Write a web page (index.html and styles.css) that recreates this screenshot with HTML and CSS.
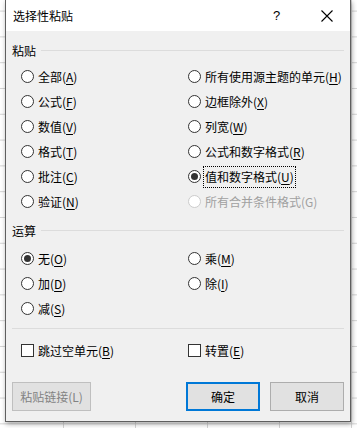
FILE: index.html
```html
<!DOCTYPE html>
<html lang="zh-CN">
<head>
    <meta charset="UTF-8">
    <meta name="viewport" content="width=device-width, initial-scale=1.0">
    <title>选择性粘贴</title>
    <link rel="stylesheet" href="styles.css">
</head>
<body>
    <div class="dialog">
        <div class="titlebar">
            <span class="title">选择性粘贴</span>
            <span class="help">?</span>
            <span class="close">
                <svg width="12" height="12" viewBox="0 0 12 12"><path d="M0.5 0.5 L11.5 11.5 M11.5 0.5 L0.5 11.5" stroke="#000" stroke-width="1.1" fill="none"/></svg>
            </span>
        </div>

        <div class="group-head"><span>粘贴</span><i class="rule"></i></div>
        <div class="options six">
            <label class="opt"><span class="radio"></span>全部(<u>A</u>)</label>
            <label class="opt"><span class="radio"></span>所有使用源主题的单元(<u>H</u>)</label>
            <label class="opt"><span class="radio"></span>公式(<u>F</u>)</label>
            <label class="opt"><span class="radio"></span>边框除外(<u>X</u>)</label>
            <label class="opt"><span class="radio"></span>数值(<u>V</u>)</label>
            <label class="opt"><span class="radio"></span>列宽(<u>W</u>)</label>
            <label class="opt"><span class="radio"></span>格式(<u>T</u>)</label>
            <label class="opt"><span class="radio"></span>公式和数字格式(<u>R</u>)</label>
            <label class="opt"><span class="radio"></span>批注(<u>C</u>)</label>
            <label class="opt"><span class="radio on"></span><span class="focus">值和数字格式(<u>U</u>)</span></label>
            <label class="opt"><span class="radio"></span>验证(<u>N</u>)</label>
            <label class="opt disabled"><span class="radio"></span>所有合并条件格式(G)</label>
        </div>

        <div class="group-head second"><span>运算</span><i class="rule"></i></div>
        <div class="options three">
            <label class="opt"><span class="radio on"></span>无(<u>O</u>)</label>
            <label class="opt"><span class="radio"></span>乘(<u>M</u>)</label>
            <label class="opt"><span class="radio"></span>加(<u>D</u>)</label>
            <label class="opt"><span class="radio"></span>除(<u>I</u>)</label>
            <label class="opt"><span class="radio"></span>减(<u>S</u>)</label>
        </div>

        <div class="separator"></div>

        <div class="options checks">
            <label class="opt"><span class="check"></span>跳过空单元(<u>B</u>)</label>
            <label class="opt"><span class="check"></span>转置(<u>E</u>)</label>
        </div>

        <div class="buttons">
            <button class="btn" disabled>粘贴链接(L)</button>
            <span class="spacer"></span>
            <button class="btn default">确定</button>
            <button class="btn">取消</button>
        </div>
    </div>
</body>
</html>
```

FILE: styles.css
```css
/* Sheet behind the dialog */
body {
    margin: 0;
    height: 428px;
    overflow: hidden;
    font-family: "Noto Sans CJK SC", "Noto Sans", sans-serif;
    font-size: 12px;
    color: #000;
    background-color: #ffffff;
    background-image:
        linear-gradient(to bottom, #d4d4d4 1px, transparent 1px),
        linear-gradient(to right, #d4d4d4 1px, transparent 1px);
    background-size: 72px 25.8px;
    background-position: 63px 10.6px;
}

.dialog {
    margin-left: 5px;
    width: 344px;
    height: 421px;
    border: 1px solid #5f5f5f;
    border-top: none;
    background-color: #f0f0f0;
    box-shadow: 1px 2px 5px rgba(0, 0, 0, 0.35);
    display: flex;
    flex-direction: column;
}

.titlebar {
    height: 31px;
    background-color: #ffffff;
    display: flex;
    align-items: center;
    padding-left: 7px;
}

.title {
    flex: 1;
    line-height: 16px;
}

.help {
    width: 12px;
    font-family: "Liberation Sans", sans-serif;
    font-size: 13px;
    margin-right: 36px;
}

.close {
    display: flex;
    margin-right: 17px;
}

.group-head {
    display: flex;
    align-items: center;
    height: 20px;
    margin-top: 9px;
    padding: 0 6px;
}

.group-head.second {
    margin-top: 6px;
}

.group-head .rule {
    flex: 1;
    height: 1px;
    background-color: #dcdcdc;
    margin-left: 5px;
}

.options {
    display: grid;
    grid-template-columns: 167px 1fr;
    grid-auto-rows: 25px;
    padding-left: 15px;
    margin-top: 4px;
}

.options.three {
    margin-top: 6px;
}

.opt {
    display: flex;
    align-items: center;
    white-space: nowrap;
    line-height: 16px;
}

.opt u {
    text-underline-offset: 2px;
}

.radio {
    width: 11px;
    height: 11px;
    border: 1px solid #333333;
    border-radius: 50%;
    background-color: #ffffff;
    margin-right: 4px;
    position: relative;
    flex: none;
}

.radio.on::after {
    content: "";
    position: absolute;
    left: 2px;
    top: 2px;
    width: 7px;
    height: 7px;
    border-radius: 50%;
    background-color: #333333;
}

.disabled {
    color: #a0a0a0;
}

.disabled .radio {
    border-color: #cccccc;
}

.focus {
    outline: 1px dotted #000;
    outline-offset: 1px;
    padding: 1px 0;
}

.separator {
    height: 1px;
    background-color: #dcdcdc;
    margin: 7px 6px 0;
}

.options.checks {
    margin-top: 9px;
}

.check {
    width: 11px;
    height: 11px;
    border: 1px solid #333333;
    background-color: #ffffff;
    margin-right: 4px;
    flex: none;
}

.buttons {
    display: flex;
    margin-top: 19px;
    padding: 0 6px;
}

.spacer {
    flex: 1;
}

.btn {
    width: 79px;
    height: 29px;
    font-family: inherit;
    font-size: 12px;
    color: #000;
    background-color: #e1e1e1;
    border: 1px solid #adadad;
    padding: 0;
    margin: 0;
}

.btn + .btn {
    margin-left: 10px;
}

.btn.default {
    width: 74px;
    border: 2px solid #0078d7;
}

.btn:last-child {
    width: 74px;
}

.btn:disabled {
    color: #838383;
    border-color: #bfbfbf;
    background-color: #e1e1e1;
}
```
